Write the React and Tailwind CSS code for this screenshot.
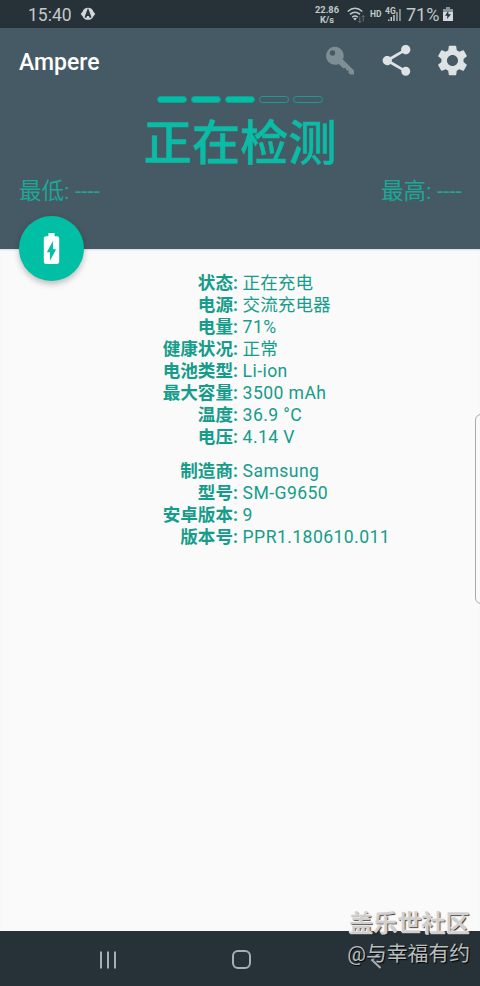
import React from "react";
import { MdShare, MdSettings, MdBatteryChargingFull } from "react-icons/md";

const batteryRows = [
  ["状态:", "正在充电"],
  ["电源:", "交流充电器"],
  ["电量:", "71%"],
  ["健康状况:", "正常"],
  ["电池类型:", "Li-ion"],
  ["最大容量:", "3500 mAh"],
  ["温度:", "36.9 °C"],
  ["电压:", "4.14 V"],
];

const deviceRows = [
  ["制造商:", "Samsung"],
  ["型号:", "SM-G9650"],
  ["安卓版本:", "9"],
  ["版本号:", "PPR1.180610.011"],
];

function StatusBar() {
  return (
    <div className="flex h-7 items-center bg-[#263238] pl-[28px] text-[#c3c8ca]">
      <span className="w-[44px] whitespace-nowrap text-[17.5px] leading-7 pt-[2px]">15:40</span>
      <svg className="ml-2 h-4 w-4" viewBox="0 0 16 16">
        <path fill="#d3d7d9" d="M8 1.8a6 6 0 0 1 5.5 4L15.3 8l-1.8 2.2a6 6 0 0 1-11 0L.7 8l1.8-2.2a6 6 0 0 1 5.5-4Z" />
        <path fill="none" stroke="#263238" strokeWidth="1.8" d="M5.4 11.6 8 4.6l2.6 7M6.2 9.2h3.6" />
      </svg>
      <div className="ml-[217px] flex w-[28px] flex-col gap-[1px] text-center text-[9.3px] font-bold">
        <span className="h-[9px] leading-[9px]">22.86</span>
        <span className="h-[9px] leading-[9px]">K/s</span>
      </div>
      <svg className="ml-[6px] h-5 w-[19px]" viewBox="0 0 19 20" fill="none" stroke="#c3c8ca" strokeWidth="1.5">
        <path d="M.7 7.5Q8 1 15.3 7.5" />
        <path d="M3 10.4Q8 6 13 10.4" />
        <path d="M5.2 13.2Q8 10.8 10.8 13.2" />
        <path fill="#c3c8ca" stroke="none" d="m6.2 14.4 1.8 2 1.8-2q-1.8-1.5-3.6 0Z" />
        <path stroke="#657077" strokeWidth="1" d="M12.8 12.5v6m-1.5-1.5 1.5 1.5 1.5-1.5M16.2 17.5v-6M14.7 13l1.5-1.5 1.5 1.5" />
      </svg>
      <span className="ml-[4px] w-[14px] text-[8.5px] font-bold leading-none">HD</span>
      <svg className="ml-[1px] h-5 w-[18px]" viewBox="0 0 18 20" fill="#c3c8ca">
        <text x="0" y="9.5" fontSize="8.5" fontWeight="700" fontFamily="Roboto, sans-serif">4G</text>
        <path d="M3 15.5h1.5V17H3zM5.5 13H7v4H5.5zM8.2 11h1.5v6H8.2z" />
        <path fill="#9da5a9" d="M11.2 8h1.5v9h-1.5zM14.2 5h1.5v12h-1.5z" />
      </svg>
      <span className="ml-[3px] w-[36px] whitespace-nowrap pt-[2px] text-[18px] leading-7">71%</span>
      <svg className="h-4 w-3" viewBox="0 0 12 16">
        <path fill="#8b9498" d="M4 1h4v2h3v4H1V3h3z" />
        <path fill="#d3d7d9" d="M1 6h10v9H1z" />
        <path fill="#263238" d="M6.2 5 3 9.8h2.4L5 13l4-4.8H6.5z" />
      </svg>
    </div>
  );
}

function Header() {
  return (
    <header className="h-[221px] bg-[#455a64]">
      <div className="flex h-[65px] items-center pl-[19px] pr-[9.5px]">
        <h1 className="flex-1 pt-[3px] text-[23px] font-medium leading-none text-white">Ampere</h1>
        <svg className="mr-[21.5px] h-[32px] w-[32px]" viewBox="0 0 32 32">
          <path
            fill="#7f8e95"
            fillRule="evenodd"
            d="M11 1.8a9 9 0 1 0 3.8 17.2l4.2 4.2 2.8-.3.2 2.4 2.6.3-.2 2 1.8 1.8H30v-3.8L18.9 14.5A9 9 0 0 0 11 1.8ZM8.5 5.3a2.7 2.7 0 1 1 0 5.4 2.7 2.7 0 0 1 0-5.4Z"
          />
        </svg>
        <MdShare className="h-[37px] w-[37px] text-[#dde2e4]" />
        <MdSettings className="ml-[19px] h-[37px] w-[37px] text-[#dde2e4]" />
      </div>
      <div className="flex justify-center gap-[4px] pt-[3px]">
        <i className="h-[7px] w-[30px] rounded-full border border-[#159d92] bg-[#00bfa5]" />
        <i className="h-[7px] w-[30px] rounded-full border border-[#159d92] bg-[#00bfa5]" />
        <i className="h-[7px] w-[30px] rounded-full border border-[#159d92] bg-[#00bfa5]" />
        <i className="h-[7px] w-[30px] rounded-full border border-[#1f9c92]" />
        <i className="h-[7px] w-[30px] rounded-full border border-[#1f9c92]" />
      </div>
      <div className="h-[72px] pt-[9px] text-center text-[48.3px] font-medium leading-[64px] text-[#0cbba5] [-webkit-text-stroke:0.5px_#0cbba5]">
        正在检测
      </div>
      <div className="flex justify-between pl-[19px] pr-[18px] text-[22.5px] leading-[32px] text-[#1ea697]">
        <span>最低: ----</span>
        <span>最高: ----</span>
      </div>
    </header>
  );
}

function InfoTable({ rows }) {
  return (
    <dl className="grid grid-cols-[238px_1fr] gap-x-[4.6px] text-[17.6px] leading-[22px] text-[#169c8a]">
      {rows.map(([label, value]) => (
        <React.Fragment key={label}>
          <dt className="h-[22px] text-right font-bold">{label}</dt>
          <dd className={/^[\x20-\xff]+$/.test(value) ? "h-[22px] whitespace-nowrap tracking-[0.42px]" : "h-[22px] whitespace-nowrap"}>
            {value}
          </dd>
        </React.Fragment>
      ))}
    </dl>
  );
}

export default function App() {
  return (
    <div className="relative flex h-[986px] w-[480px] flex-col overflow-hidden bg-[#fafafa] font-['Roboto','Noto_Sans_CJK_SC',sans-serif]">
      <StatusBar />
      <Header />
      <main className="flex flex-1 flex-col gap-[12px] pt-[23px] shadow-[inset_0_2px_2px_-1px_#d5d9dc]">
        <InfoTable rows={batteryRows} />
        <InfoTable rows={deviceRows} />
      </main>
      <nav className="flex h-[55px] shrink-0 items-center bg-[#263238] pt-[2px]">
        <svg className="ml-[99px] h-[18px] w-[18px]" viewBox="0 0 18 18" fill="#a8afb2">
          <path d="M1 .5h2v17H1zM8 .5h2v17H8zM15 .5h2v17h-2z" />
        </svg>
        <div className="ml-[115px] h-[19px] w-[19px] rounded-[6px] border-2 border-[#a8afb2]" />
        <svg className="ml-[119px] h-[18px] w-[12px]" viewBox="0 0 12 18" fill="none" stroke="#a8afb2" strokeWidth="2">
          <path d="M10.5 1 2 9l8.5 8" />
        </svg>
      </nav>
      <button className="absolute left-[19px] top-[216px] flex h-[65px] w-[65px] items-center justify-center rounded-full bg-[#00bfa5] text-white shadow-[0_3px_6px_rgba(0,0,0,0.25)]">
        <MdBatteryChargingFull className="h-[37px] w-[37px]" />
      </button>
      <div className="absolute left-[475px] top-[414px] h-[190px] w-4 rounded-[6px] border border-[#aaa]" />
      <div className="absolute right-[10px] top-[908px] text-right leading-[32px]">
        <div className="text-[24.2px] font-medium text-[#cfcfcf] [text-shadow:-1px_-1px_0_#f7f7f7,1px_1px_1px_#222] [-webkit-text-stroke:0.5px_#cfcfcf]">盖乐世社区</div>
        <div className="text-[20.8px] leading-[29px] text-[#b9bdbf] [text-shadow:1px_1px_1px_#000]">@与幸福有约</div>
      </div>
    </div>
  );
}
